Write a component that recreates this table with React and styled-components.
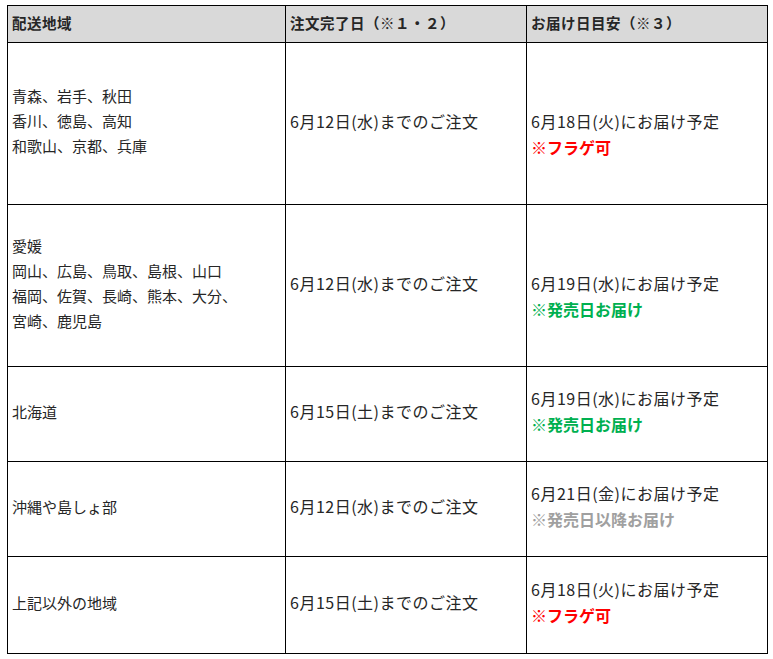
import React from 'react';
import styled, {createGlobalStyle} from 'styled-components';

const GlobalStyle = createGlobalStyle`
    body {
        margin: 0;
        background: #fff;
        font-family: "Noto Sans CJK JP", "Noto Sans", sans-serif;
    }
`;

const Page = styled.div`
    padding: 5px 0 0 7px;
`;

const Table = styled.table`
    border-collapse: collapse;
    table-layout: fixed;
    width: 760px;
    color: #262626;
`;

const Col = styled.col`
    width: ${props => props.width}px;
`;

const Head = styled.th`
    background-color: #d9d9d9;
    border: 1px solid #000;
    text-align: left;
    font-size: 14.5px;
    font-weight: bold;
    letter-spacing: 0.5px;
    padding: 0 4px 4px;
    height: 32px;
    white-space: nowrap;
`;

const Row = styled.tr`
    height: ${props => props.height}px;
`;

const Cell = styled.td`
    border: 1px solid #000;
    padding: ${props => props.lead ? 26 : 0}px 4px 6px;
    vertical-align: middle;
    font-size: ${props => props.small ? 15 : 16}px;
    line-height: ${props => props.small ? 25 : 26}px;
    letter-spacing: ${props => props.small ? 0 : 0.5}px;
`;

const Line = styled.div`
    white-space: nowrap;
`;

const Note = styled.div`
    font-weight: bold;
    white-space: nowrap;
    letter-spacing: 0;
    color: ${props => props.color};
`;

const notes = {
    flag: {text: "※フラゲ可", color: "#ff0000"},
    release: {text: "※発売日お届け", color: "#00b050"},
    after: {text: "※発売日以降お届け", color: "#a0a0a0"},
};

const rows = [
    {
        areas: ["青森、岩手、秋田", "香川、徳島、高知", "和歌山、京都、兵庫"],
        order: "6月12日(水)までのご注文",
        delivery: "6月18日(火)にお届け予定",
        note: "flag",
        lead: true,
        height: 162,
    },
    {
        areas: ["愛媛", "岡山、広島、鳥取、島根、山口", "福岡、佐賀、長崎、熊本、大分、", "宮崎、鹿児島"],
        order: "6月12日(水)までのご注文",
        delivery: "6月19日(水)にお届け予定",
        note: "release",
        lead: true,
        height: 162,
    },
    {
        areas: ["北海道"],
        order: "6月15日(土)までのご注文",
        delivery: "6月19日(水)にお届け予定",
        note: "release",
        height: 95,
    },
    {
        areas: ["沖縄や島しょ部"],
        order: "6月12日(水)までのご注文",
        delivery: "6月21日(金)にお届け予定",
        note: "after",
        height: 95,
    },
    {
        areas: ["上記以外の地域"],
        order: "6月15日(土)までのご注文",
        delivery: "6月18日(火)にお届け予定",
        note: "flag",
        height: 97,
    },
];

const App = () => {
    return <Page>
        <GlobalStyle />
        <Table>
            <colgroup>
                <Col width={278} />
                <Col width={241} />
                <Col width={241} />
            </colgroup>
            <thead>
                <tr>
                    <Head>配送地域</Head>
                    <Head>注文完了日（※１・２）</Head>
                    <Head>お届け日目安（※３）</Head>
                </tr>
            </thead>
            <tbody>
                {rows.map((row, i) => (
                    <Row key={i} height={row.height}>
                        <Cell small>
                            {row.areas.map(a => <Line key={a}>{a}</Line>)}
                        </Cell>
                        <Cell>{row.order}</Cell>
                        <Cell lead={row.lead}>
                            <Line>{row.delivery}</Line>
                            <Note color={notes[row.note].color}>{notes[row.note].text}</Note>
                        </Cell>
                    </Row>
                ))}
            </tbody>
        </Table>
    </Page>
};

export default App;
